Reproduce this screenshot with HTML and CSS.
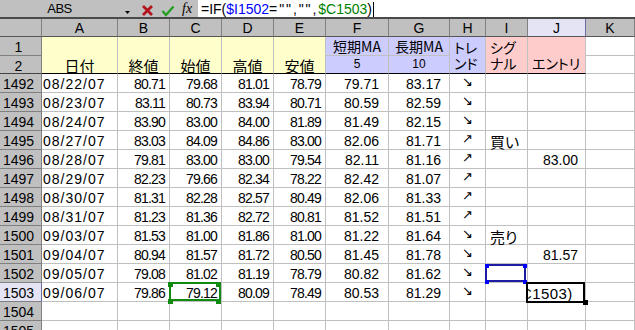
FILE: index.html
```html
<!DOCTYPE html>
<html lang="ja">

<head>
    <meta charset="UTF-8">
    <meta name="viewport" content="width=device-width, initial-scale=1.0">
    <title>シグナル</title>
    <link rel="stylesheet" href="styles.css">
</head>

<body>
    <div class="formula-bar">
        <div class="name-box">ABS</div>
        <div class="name-arrow">
            <svg width="5" height="3" viewBox="0 0 5 3"><polygon points="0,0 5,0 2.5,3" fill="#000" /></svg>
        </div>
        <svg class="icon-cancel" width="13" height="13" viewBox="0 0 13 13">
            <path d="M2 2 L11 11 M11 2 L2 11" stroke="#b3141b" stroke-width="2.8" fill="none" />
        </svg>
        <svg class="icon-enter" width="14" height="12" viewBox="0 0 14 12">
            <path d="M1.5 6 L5 10 L12.5 1.5" stroke="#23a023" stroke-width="2.4" fill="none" />
        </svg>
        <div class="icon-fx">fx</div>
        <div class="formula-input">=IF(<span class="ref-blue">$I1502</span><span class="quotes">="","",</span><span class="ref-green">$C1503</span>)<span class="caret"></span></div>
    </div>

    <div id="sheet" class="sheet">
        <div class="col-head"></div>
        <div class="col-head">A</div>
        <div class="col-head">B</div>
        <div class="col-head">C</div>
        <div class="col-head">D</div>
        <div class="col-head">E</div>
        <div class="col-head">F</div>
        <div class="col-head">G</div>
        <div class="col-head">H</div>
        <div class="col-head">I</div>
        <div class="col-head selected">J</div>
        <div class="col-head">K</div>

        <div class="row-head">1</div>
        <div class="cell title yellow">日付</div>
        <div class="cell title yellow">終値</div>
        <div class="cell title yellow">始値</div>
        <div class="cell title yellow">高値</div>
        <div class="cell title yellow">安値</div>
        <div class="cell blue ma-name">短期MA</div>
        <div class="cell blue ma-name">長期MA</div>
        <div class="cell title wrap blue"><span>トレ</span><span>ンド</span></div>
        <div class="cell title wrap pink"><span>シグ</span><span>ナル</span></div>
        <div class="cell title wrap pink"><span>エントリ</span></div>
        <div class="cell"></div>

        <div class="row-head row-two">2</div>
        <div class="cell blue ma-days">5</div>
        <div class="cell blue ma-days">10</div>
        <div class="cell"></div>
    </div>

    <script>
        document.addEventListener('DOMContentLoaded', function () {
            const sheet = document.getElementById('sheet');
            const down = '↘';
            const up = '↗';

            const rows = [
                [1492, '08/22/07', '80.71', '79.68', '81.01', '78.79', '79.71', '83.17', down, '', ''],
                [1493, '08/23/07', '83.11', '80.73', '83.94', '80.71', '80.59', '82.59', down, '', ''],
                [1494, '08/24/07', '83.90', '83.00', '84.00', '81.89', '81.49', '82.15', down, '', ''],
                [1495, '08/27/07', '83.03', '84.09', '84.86', '83.00', '82.06', '81.71', up, '買い', ''],
                [1496, '08/28/07', '79.81', '83.00', '83.00', '79.54', '82.11', '81.16', up, '', '83.00'],
                [1497, '08/29/07', '82.23', '79.66', '82.34', '78.22', '82.42', '81.07', up, '', ''],
                [1498, '08/30/07', '81.31', '82.28', '82.57', '80.49', '82.06', '81.33', up, '', ''],
                [1499, '08/31/07', '81.23', '81.36', '82.72', '80.81', '81.52', '81.51', up, '', ''],
                [1500, '09/03/07', '81.53', '81.00', '81.86', '81.00', '81.22', '81.64', down, '売り', ''],
                [1501, '09/04/07', '80.94', '81.57', '81.72', '80.50', '81.45', '81.78', down, '', '81.57'],
                [1502, '09/05/07', '79.08', '81.02', '81.19', '78.79', '80.82', '81.62', down, '', ''],
                [1503, '09/06/07', '79.86', '79.12', '80.09', '78.49', '80.53', '81.29', down, '', ''],
                [1504],
                [1505]
            ];
            const kinds = ['date', 'num', 'num', 'num', 'num', 'ma-short', 'ma-long', 'trend', 'signal', 'entry', ''];

            rows.forEach(function (row) {
                const head = document.createElement('div');
                head.className = 'row-head';
                head.textContent = row[0];
                if (row[0] === 1503) head.classList.add('selected');
                sheet.appendChild(head);

                for (let i = 0; i < kinds.length; i++) {
                    const div = document.createElement('div');
                    div.className = 'cell ' + kinds[i];
                    div.textContent = row[i + 1] || '';

                    // referencias da formula e celula ativa
                    if (row[0] === 1503 && i === 2) div.classList.add('ref-box-green');
                    if (row[0] === 1502 && i === 8) div.classList.add('ref-box-blue');
                    if (row[0] === 1503 && i === 9) {
                        div.classList.add('active');
                        const edit = document.createElement('span');
                        edit.className = 'edit-text';
                        edit.innerHTML = '<span>C1503)</span>';
                        div.appendChild(edit);
                    }
                    sheet.appendChild(div);
                }
            });
        });
    </script>
</body>

</html>
```

FILE: styles.css
```css
* {
    box-sizing: border-box;
}

body {
    margin: 0;
    width: 635px;
    height: 330px;
    overflow: hidden;
    background-color: #fff;
    color: #000;
    font-family: "Liberation Sans", "Noto Sans CJK JP", sans-serif;
    font-size: 14px;
}

/* barra de formula */
.formula-bar {
    display: flex;
    align-items: flex-start;
    height: 19px;
    background-color: #c0c0c0;
    border-bottom: 2px solid #4a4a4a;
}

.name-box {
    width: 119px;
    line-height: 17px;
    font-size: 13px;
    letter-spacing: -0.5px;
    text-align: center;
}

.name-arrow {
    width: 16px;
    height: 17px;
    display: flex;
    justify-content: center;
    align-items: flex-end;
    padding-bottom: 3px;
}

.icon-cancel {
    margin: 4px 0 0 6px;
}

.icon-enter {
    margin: 5px 0 0 7px;
}

.icon-fx {
    width: 17px;
    margin-left: 6px;
    padding-left: 1px;
    line-height: 17px;
    font-family: "Liberation Serif", serif;
    font-style: italic;
    font-size: 14px;
}

.formula-input {
    flex: 1;
    height: 17px;
    padding: 1px 0 0 3px;
    line-height: 17px;
    background-color: #fff;
    white-space: nowrap;
    overflow: hidden;
}

.ref-blue {
    color: #0000ff;
}

.ref-green {
    color: #008000;
}

.quotes {
    letter-spacing: 1.9px;
}

.caret {
    display: inline-block;
    width: 1px;
    height: 15px;
    margin-left: 1px;
    vertical-align: -3px;
    background-color: #000;
}

/* planilha */
.sheet {
    display: grid;
    grid-template-columns: 42px 76px 52px 52px 52px 52px 63px 61px 36px 42px 58px 1fr;
    grid-template-rows: 18px 19px 18px;
    grid-auto-rows: 19px;
}

.col-head {
    padding-top: 1px;
    line-height: 17px;
    text-align: center;
    background-color: #c0c0c0;
    border-right: 1px solid #808080;
    border-bottom: 1px solid #555;
    overflow: hidden;
}

.col-head.selected {
    background-color: #e4e4f4;
    border-right-color: #6c6ca8;
}

.row-head {
    padding: 2px 4px 0 0;
    line-height: 17px;
    text-align: center;
    background-color: #c0c0c0;
    border-right: 1px solid #808080;
    border-bottom: 1px solid #808080;
    overflow: hidden;
}

.row-head.selected {
    background-color: #e4e4f4;
    border-right-color: #6c6ca8;
}

.row-head.row-two {
    border-bottom-color: #444;
}

.cell {
    position: relative;
    padding: 2px 4px 0;
    line-height: 17px;
    white-space: nowrap;
    border-right: 1px solid #c0c0c0;
    border-bottom: 1px solid #c0c0c0;
}

.yellow {
    background-color: #ffffcc;
}

.blue {
    background-color: #ccccff;
}

.pink {
    background-color: #ffcccc;
}

.title {
    grid-row: span 2;
    display: flex;
    align-items: flex-end;
    justify-content: center;
    padding: 0;
    line-height: 15px;
    font-family: "Noto Sans CJK JP", sans-serif;
    font-feature-settings: "palt";
    font-size: 15px;
    border-bottom-color: #000;
}

.title.wrap {
    flex-direction: column;
    align-items: flex-start;
    justify-content: flex-end;
    padding: 0 0 2px 4px;
    line-height: 16px;
    font-size: 14px;
}

.ma-name {
    padding: 0;
    line-height: 18px;
    text-align: center;
    font-family: "Noto Sans CJK JP", sans-serif;
    font-size: 14px;
}

.ma-days {
    padding: 0;
    line-height: 17px;
    text-align: center;
    font-size: 12px;
    border-bottom-color: #000;
}

.date {
    padding-left: 1px;
    letter-spacing: 1px;
}

.num {
    text-align: right;
    letter-spacing: -0.8px;
}

.ma-short {
    text-align: right;
    padding-right: 9px;
}

.ma-long {
    text-align: right;
    padding-right: 8px;
}

.trend {
    padding-top: 1px;
    line-height: 13px;
    text-align: center;
    font-family: "DejaVu Sans", sans-serif;
    font-size: 13px;
}

.signal {
    font-family: "Noto Sans CJK JP", sans-serif;
    font-feature-settings: "palt";
    font-size: 15px;
    line-height: 17px;
}

.entry {
    text-align: right;
    padding-right: 7px;
}

/* caixas das referencias */
.ref-box-green::after,
.ref-box-blue::after,
.active::after {
    content: '';
    position: absolute;
    border-style: solid;
    border-width: 2px;
}

.ref-box-green::after {
    left: -1px;
    top: -1px;
    right: 0;
    bottom: 0;
    border-color: #108a10;
}

.ref-box-green::before {
    content: '';
    position: absolute;
    left: -2px;
    top: -1px;
    width: 5px;
    height: 5px;
    background-color: #108a10;
    box-shadow: 48px 0 0 #108a10, 0 17px 0 #108a10, 48px 17px 0 #108a10;
    z-index: 1;
}

.ref-box-blue::after {
    left: -1px;
    top: 0;
    right: 1px;
    bottom: 0;
    border-color: #1c1ca4;
}

.ref-box-blue::before {
    content: '';
    position: absolute;
    left: -1px;
    top: 0;
    width: 4px;
    height: 4px;
    background-color: #0000ff;
    box-shadow: 38px 0 0 #0000ff, 0 16px 0 #0000ff, 38px 16px 0 #0000ff;
    z-index: 1;
}

.active {
    padding: 2px 0 0;
    text-align: left;
}

.active::after {
    left: -2px;
    top: -1px;
    right: 0;
    bottom: -2px;
    border-color: #000;
    z-index: 2;
}

.active::before {
    content: '';
    position: absolute;
    left: 55px;
    top: 17px;
    width: 5px;
    height: 5px;
    background-color: #000;
    z-index: 3;
}

.edit-text {
    display: block;
    overflow: hidden;
    text-align: left;
    font-size: 15px;
    line-height: 17px;
}

.edit-text span {
    display: inline-block;
    margin-left: -7px;
    letter-spacing: 0.4px;
}
```
